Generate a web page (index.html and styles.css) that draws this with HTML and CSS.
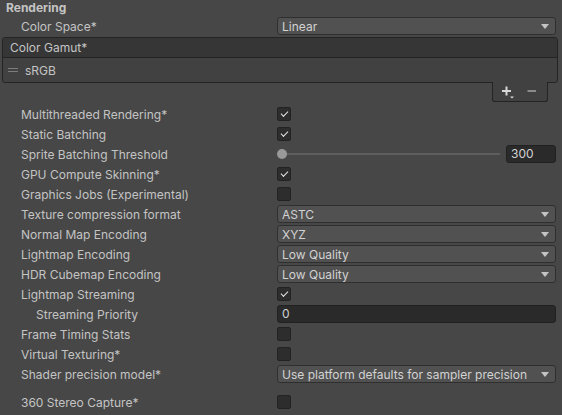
FILE: index.html
```html
<!DOCTYPE html>
<html>
<head>
<meta charset="utf-8">
<link rel="stylesheet" href="styles.css">
</head>
<body>
<div class="inspector">
  <div class="section-title">Rendering</div>
  <div class="row first">
    <div class="label">Color Space*</div>
    <div class="control"><div class="dropdown"><span>Linear</span><i class="arrow"></i></div></div>
  </div>
  <div class="list">
    <div class="list-header">Color Gamut*</div>
    <div class="list-body">
      <span class="handle"></span><span>sRGB</span>
    </div>
  </div>
  <div class="list-footer-wrap">
    <div class="list-footer">
      <svg class="icon" width="14" height="13" viewBox="0 0 14 13">
        <path d="M4.5 0.5v9M0 5h9" stroke="#d8d8d8" stroke-width="2" fill="none"/>
        <path d="M8 10.5h4l-2 2z" fill="#d8d8d8"/>
      </svg>
      <svg class="icon" width="10" height="13" viewBox="0 0 10 13">
        <path d="M0.5 5h8.5" stroke="#8a8a8a" stroke-width="2" fill="none"/>
      </svg>
    </div>
  </div>
  <div class="rows">
    <div class="row"><div class="label">Multithreaded Rendering*</div><div class="control"><span class="check on"></span></div></div>
    <div class="row"><div class="label">Static Batching</div><div class="control"><span class="check on"></span></div></div>
    <div class="row"><div class="label">Sprite Batching Threshold</div><div class="control slider"><div class="track"><span class="thumb"></span></div><div class="numfield">300</div></div></div>
    <div class="row"><div class="label">GPU Compute Skinning*</div><div class="control"><span class="check on"></span></div></div>
    <div class="row"><div class="label">Graphics Jobs (Experimental)</div><div class="control"><span class="check"></span></div></div>
    <div class="row"><div class="label">Texture compression format</div><div class="control"><div class="dropdown"><span>ASTC</span><i class="arrow"></i></div></div></div>
    <div class="row"><div class="label">Normal Map Encoding</div><div class="control"><div class="dropdown"><span>XYZ</span><i class="arrow"></i></div></div></div>
    <div class="row"><div class="label">Lightmap Encoding</div><div class="control"><div class="dropdown"><span>Low Quality</span><i class="arrow"></i></div></div></div>
    <div class="row"><div class="label">HDR Cubemap Encoding</div><div class="control"><div class="dropdown"><span>Low Quality</span><i class="arrow"></i></div></div></div>
    <div class="row"><div class="label">Lightmap Streaming</div><div class="control"><span class="check on"></span></div></div>
    <div class="row"><div class="label indent">Streaming Priority</div><div class="control"><div class="textfield">0</div></div></div>
    <div class="row"><div class="label">Frame Timing Stats</div><div class="control"><span class="check"></span></div></div>
    <div class="row"><div class="label">Virtual Texturing*</div><div class="control"><span class="check"></span></div></div>
    <div class="row"><div class="label">Shader precision model*</div><div class="control"><div class="dropdown"><span>Use platform defaults for sampler precision</span><i class="arrow"></i></div></div></div>
    <div class="row spaced"><div class="label">360 Stereo Capture*</div><div class="control"><span class="check"></span></div></div>
  </div>
</div>
</body>
</html>
```

FILE: styles.css
```css
html, body {
  margin: 0;
  padding: 0;
  background: #474747;
  width: 562px;
  height: 415px;
  overflow: hidden;
}
.inspector {
  font-family: Inter, "Noto Sans", "Liberation Sans", sans-serif;
  font-size: 12px;
  color: #c4c4c4;
}
.section-title {
  font-weight: bold;
  padding-left: 6px;
  height: 16px;
  line-height: 16px;
  margin-top: 0;
}
.row {
  display: flex;
  align-items: center;
  height: 20px;
  padding-left: 21px;
}
.label {
  width: 256px;
  flex: none;
  white-space: nowrap;
}
.label.indent {
  padding-left: 15px;
  box-sizing: border-box;
}
.control {
  width: 279px;
  flex: none;
  display: flex;
  align-items: center;
}
.dropdown {
  box-sizing: border-box;
  width: 279px;
  height: 18px;
  background: #515151;
  border: 1px solid #2f2f2f;
  border-radius: 3px;
  display: flex;
  align-items: center;
  justify-content: space-between;
  padding: 0 6px 0 4px;
  color: #d2d2d2;
}
.arrow {
  width: 0;
  height: 0;
  border-left: 4px solid transparent;
  border-right: 4px solid transparent;
  border-top: 5px solid #c4c4c4;
}
.list {
  margin: 1px 4px 0 2px;
  border: 1px solid #242424;
  border-radius: 3px;
  background: #414141;
}
.list-header {
  height: 19px;
  line-height: 19px;
  background: #363636;
  border-bottom: 1px solid #242424;
  padding-left: 7px;
  border-radius: 3px 3px 0 0;
}
.list-body {
  height: 24px;
  display: flex;
  align-items: center;
  padding-left: 5px;
}
.handle {
  width: 10px;
  height: 2px;
  border-top: 1px solid #7c7c7c;
  border-bottom: 1px solid #7c7c7c;
  margin-right: 7px;
}
.list-footer-wrap {
  display: flex;
  justify-content: flex-end;
  padding-right: 14px;
}
.list-footer {
  box-sizing: border-box;
  width: 56px;
  height: 20px;
  margin-top: -1px;
  border: 1px solid #242424;
  border-top: none;
  border-radius: 0 0 3px 3px;
  background: #414141;
  display: flex;
  align-items: center;
  padding-left: 9px;
  gap: 11px;
}
.icon {
  display: block;
  margin-top: 2px;
}
.rows {
  margin-top: 2px;
}
.row.spaced {
  margin-top: 8px;
}
.check {
  box-sizing: border-box;
  width: 14px;
  height: 14px;
  background: #2d2d2d;
  border: 1px solid #222;
  border-radius: 2px;
  position: relative;
}
.check.on::after {
  content: "";
  position: absolute;
  left: 3px;
  top: 1px;
  width: 6px;
  height: 3px;
  border-left: 1.5px solid #e6e6e6;
  border-bottom: 1.5px solid #e6e6e6;
  transform: translate(0px, 2px) rotate(-45deg);
}
.slider {
  justify-content: space-between;
}
.track {
  position: relative;
  width: 218px;
  height: 2px;
  margin-left: 5px;
  background: #5e5e5e;
}
.thumb {
  position: absolute;
  left: -5px;
  top: -4px;
  width: 10px;
  height: 10px;
  border-radius: 50%;
  background: #999;
}
.numfield, .textfield {
  box-sizing: border-box;
  height: 18px;
  background: #2a2a2a;
  border: 1px solid #212121;
  border-radius: 3px;
  padding-left: 4px;
  line-height: 16px;
  color: #d2d2d2;
}
.numfield {
  width: 50px;
}
.textfield {
  width: 279px;
}
```
